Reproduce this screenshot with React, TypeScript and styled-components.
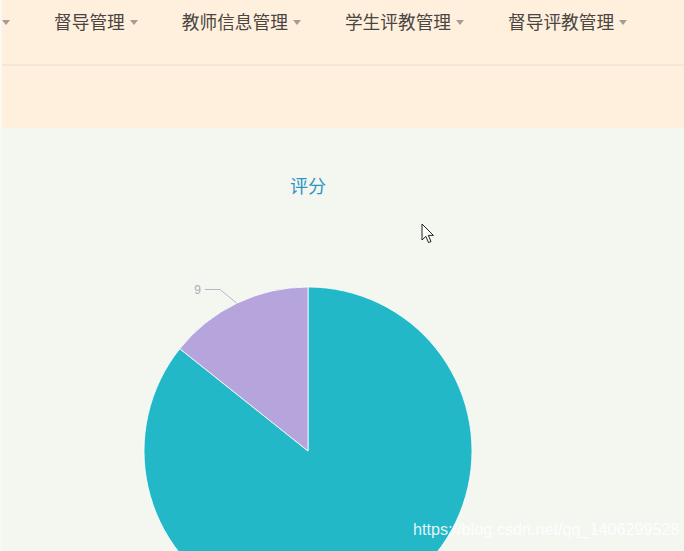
import React from "react";
import styled, { createGlobalStyle } from "styled-components";

const Global = createGlobalStyle`
  html, body { margin: 0; padding: 0; }
  body { background: #f3f7f0; font-family: "Noto Sans CJK SC", "Noto Sans", sans-serif; }
`;

const Page = styled.div`
  position: relative;
  width: 684px;
  height: 551px;
  overflow: hidden;
  box-sizing: border-box;
  border-left: 2px solid #faf8f3;
  display: flex;
  flex-direction: column;
  background: #f3f7f0;
`;

const NavBar = styled.nav`
  height: 64px;
  flex: none;
  background: #fef0dc;
  border-bottom: 2px solid #f2e6d7;
  display: flex;
  align-items: flex-start;
`;

const NavList = styled.ul`
  list-style: none;
  margin: 0;
  padding: 0;
  height: 44px;
  display: flex;
  align-items: center;
  gap: 44px;
`;

const NavItem = styled.li`
  display: flex;
  align-items: center;
  gap: 5px;
  font-size: 17.7px;
  line-height: 1;
  color: #4a4542;
  white-space: nowrap;
`;

const Caret = styled.span`
  display: inline-block;
  width: 0;
  height: 0;
  border-left: 4px solid transparent;
  border-right: 4px solid transparent;
  border-top: 5px solid #a39d97;
  margin-top: 1px;
`;

const SubBar = styled.div`
  height: 62px;
  flex: none;
  background: #fef0dc;
`;

const Content = styled.main`
  flex: 1;
  background: #f3f7f0;
  display: flex;
  flex-direction: column;
`;

const ChartBox = styled.section`
  width: 614px;
  display: flex;
  flex-direction: column;
`;

const Title = styled.h2`
  margin: 46px 0 0;
  height: 22px;
  line-height: 22px;
  text-align: center;
  font-size: 18px;
  font-weight: 400;
  color: #2e93c5;
  padding-right: 2px;
`;

const ChartSvg = styled.svg`
  display: block;
  flex: none;
`;

const Watermark = styled.div`
  position: absolute;
  left: 411px;
  top: 520px;
  font-family: "Liberation Sans", Arial, sans-serif;
  font-size: 16.2px;
  color: rgba(255, 255, 255, 0.88);
  white-space: nowrap;
  letter-spacing: 0;
`;

const Cursor = styled.svg`
  position: absolute;
  left: 419px;
  top: 223px;
`;

const navItems = ["督导管理", "教师信息管理", "学生评教管理", "督导评教管理"];

export default function App() {
  const cx = 308;
  const cy = 451;
  const r = 164;
  const frac = 9 / 63;
  const ang = frac * Math.PI * 2;
  const ex = cx - r * Math.sin(ang);
  const ey = cy - r * Math.cos(ang);
  const mid = ang / 2;
  const mx = cx - r * Math.sin(mid);
  const my = cy - r * Math.cos(mid);

  return (
    <>
      <Global />
      <Page>
        <NavBar>
          <NavList>
            <NavItem>
              <Caret />
            </NavItem>
            {navItems.map((t) => (
              <NavItem key={t}>
                {t}
                <Caret />
              </NavItem>
            ))}
          </NavList>
        </NavBar>
        <SubBar />
        <Content>
          <ChartBox>
            <Title>评分</Title>
            <ChartSvg width={614} height={355} viewBox="2 196 614 355">
              <path
                d={`M${cx} ${cy} L${cx} ${cy - r} A${r} ${r} 0 1 1 ${ex} ${ey} Z`}
                fill="#22b8c8"
                stroke="#ffffff"
                strokeWidth={0.8}
              />
              <path
                d={`M${cx} ${cy} L${ex} ${ey} A${r} ${r} 0 0 1 ${cx} ${cy - r} Z`}
                fill="#b5a5dc"
                stroke="#ffffff"
                strokeWidth={0.8}
              />
              <polyline
                points={`${mx},${my} 220,289.5 205,289.5`}
                fill="none"
                stroke="#b9b7c4"
                strokeWidth={1}
              />
              <text
                x={201}
                y={293.5}
                textAnchor="end"
                fontFamily="Liberation Sans, Arial, sans-serif"
                fontSize={12}
                fill="#aeacba"
              >
                9
              </text>
            </ChartSvg>
          </ChartBox>
        </Content>
        <Cursor width={14} height={22} viewBox="0 0 14 22">
          <path
            d="M1 1 L1 17 L4.8 13.4 L7.6 19.6 L10 18.5 L7.3 12.4 L12.4 12.4 Z"
            fill="#ffffff"
            stroke="#222222"
            strokeWidth={1}
            strokeLinejoin="round"
          />
        </Cursor>
        <Watermark>https://blog.csdn.net/qq_1406299528</Watermark>
      </Page>
    </>
  );
}
